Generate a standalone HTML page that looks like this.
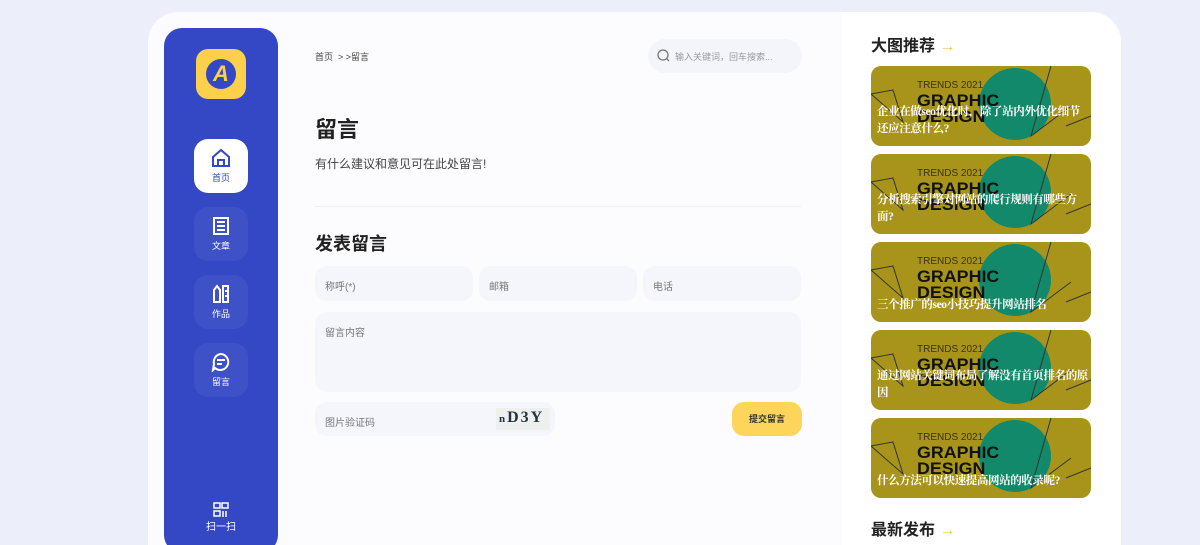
<!DOCTYPE html>
<html><head><meta charset="utf-8"><style>
*{margin:0;padding:0;box-sizing:border-box}
html,body{width:1200px;height:545px;overflow:hidden}
body{background:#eceef9;font-family:"Liberation Sans","Noto Sans CJK SC",sans-serif;position:relative}
.card{position:absolute;left:148px;top:12px;width:973px;height:545px;background:#fcfcfe;border-radius:30px 30px 0 0;overflow:hidden}
.right{position:absolute;left:694px;top:0;width:279px;height:545px;background:#fff}
.side{position:absolute;left:16px;top:16px;width:114px;height:525px;background:#3447c4;border-radius:18px}
.logo{position:absolute;left:32px;top:21px;width:50px;height:50px;background:#fcd04a;border-radius:12px}
.logo .c{position:absolute;left:10px;top:10px;width:30px;height:30px;border-radius:50%;background:#3447c4}
.logo .c span{position:absolute;left:0;top:2px;width:30px;text-align:center;color:#fcd04a;font-weight:bold;font-style:italic;font-size:22px}
.nav{position:absolute;left:30px;width:54px;height:54px;border-radius:14px;background:rgba(255,255,255,.06);color:#fff;font-size:9px;text-align:center}
.nav.on{background:#fff;color:#3447c4}
.nav svg{display:block;margin:9px auto 3px}
.abs{position:absolute}
.inp{position:absolute;background:#f5f6fb;border-radius:12px;font-size:10px;color:#777;padding:12px 10px}
.pic{position:absolute;left:29px;width:220px;height:80px;border-radius:10px;background:#a8941a;overflow:hidden}
.pic .ci{position:absolute;left:108px;top:2px;width:72px;height:72px;border-radius:50%;background:#12896a}
.pic .tr{position:absolute;left:46px;top:14px;font-size:10px;color:#3a3410}
.pic .g{position:absolute;left:46px;top:27px;font-size:17px;font-weight:900;color:#111;line-height:16px;transform:scaleX(1.05);transform-origin:left}
.pic .t{position:absolute;left:6px;right:2px;bottom:8px;color:#fff;font-size:11.5px;letter-spacing:-0.4px;font-weight:bold;line-height:17px;font-family:"Liberation Serif","Noto Serif CJK SC",serif}
.h{font-size:16px;font-weight:bold;color:#222}
.h i{color:#f6c34b;font-style:normal;font-weight:normal}
</style></head><body>
<div class="card">
 <div class="right">
  <div class="abs h" style="left:29px;top:20px">大图推荐 <i>→</i></div>
  <div class="pic" style="top:54px"><div class="ci"></div><svg class="abs" style="left:0;top:0" width="220" height="80"><path d="M0 28L22 24 32 56Z M180 0L160 70 200 40 M195 60L220 50" stroke="#333" fill="none" stroke-width="1"/></svg><div class="tr">TRENDS 2021</div><div class="g">GRAPHIC<br>DESIGN</div><div class="t">企业在做seo优化时，除了站内外优化细节还应注意什么?</div></div>
  <div class="pic" style="top:142px"><div class="ci"></div><svg class="abs" style="left:0;top:0" width="220" height="80"><path d="M0 28L22 24 32 56Z M180 0L160 70 200 40 M195 60L220 50" stroke="#333" fill="none" stroke-width="1"/></svg><div class="tr">TRENDS 2021</div><div class="g">GRAPHIC<br>DESIGN</div><div class="t">分析搜索引擎对网站的爬行规则有哪些方面?</div></div>
  <div class="pic" style="top:230px"><div class="ci"></div><svg class="abs" style="left:0;top:0" width="220" height="80"><path d="M0 28L22 24 32 56Z M180 0L160 70 200 40 M195 60L220 50" stroke="#333" fill="none" stroke-width="1"/></svg><div class="tr">TRENDS 2021</div><div class="g">GRAPHIC<br>DESIGN</div><div class="t">三个推广的seo小技巧提升网站排名</div></div>
  <div class="pic" style="top:318px"><div class="ci"></div><svg class="abs" style="left:0;top:0" width="220" height="80"><path d="M0 28L22 24 32 56Z M180 0L160 70 200 40 M195 60L220 50" stroke="#333" fill="none" stroke-width="1"/></svg><div class="tr">TRENDS 2021</div><div class="g">GRAPHIC<br>DESIGN</div><div class="t">通过网站关键词布局了解没有首页排名的原因</div></div>
  <div class="pic" style="top:406px"><div class="ci"></div><svg class="abs" style="left:0;top:0" width="220" height="80"><path d="M0 28L22 24 32 56Z M180 0L160 70 200 40 M195 60L220 50" stroke="#333" fill="none" stroke-width="1"/></svg><div class="tr">TRENDS 2021</div><div class="g">GRAPHIC<br>DESIGN</div><div class="t">什么方法可以快速提高网站的收录呢?</div></div>
  <div class="abs h" style="left:29px;top:504px">最新发布 <i>→</i></div>
 </div>
 <div class="side">
  <div class="logo"><div class="c"><span>A</span></div></div>
  <div class="nav on" style="top:111px"><svg width="20" height="20" viewBox="0 0 20 20" fill="none" stroke="#3447c4" stroke-width="2"><path d="M2 9L10 2 18 9V18H2Z M7 18V12H13V18"/></svg>首页</div>
  <div class="nav" style="top:179px"><svg width="20" height="20" viewBox="0 0 20 20" fill="none" stroke="#fff" stroke-width="2"><rect x="3" y="2" width="14" height="16"/><path d="M6 6H14M6 10H14M6 14H14"/></svg>文章</div>
  <div class="nav" style="top:247px"><svg width="20" height="20" viewBox="0 0 20 20" fill="none" stroke="#fff" stroke-width="2"><path d="M3 18V6L6 2 9 6V18Z M12 2H17V18H12Z M14 7H17M14 12H17"/></svg>作品</div>
  <div class="nav" style="top:315px"><svg width="20" height="20" viewBox="0 0 20 20" fill="none" stroke="#fff" stroke-width="2"><path d="M10 2A8 8 0 1 1 4 16L2 18 3 12A8 8 0 0 1 10 2Z M6 8H14M6 12H11"/></svg>留言</div>
  <div class="abs" style="left:0;top:474px;width:114px;text-align:center;color:#fff;font-size:10px"><svg width="16" height="16" viewBox="0 0 16 16" fill="none" stroke="#fff" stroke-width="1.5" style="display:block;margin:0 auto"><rect x="1" y="1" width="6" height="5"/><rect x="9" y="1" width="6" height="5"/><rect x="1" y="9" width="6" height="5"/><path d="M10 9V15M13 9V15"/></svg>扫一扫</div>
 </div>
 <div class="abs" style="left:167px;top:38px;font-size:9px;color:#444">首页 &nbsp;&gt; &gt;留言</div>
 <div class="abs" style="left:500px;top:27px;width:154px;height:34px;border-radius:17px;background:#f4f5fa;font-size:9px;color:#999;padding:11px 0 0 27px;white-space:nowrap"><svg class="abs" style="left:9px;top:10px" width="13" height="13" viewBox="0 0 13 13" fill="none" stroke="#777" stroke-width="1.3"><circle cx="6" cy="6" r="5"/><path d="M10 10L12 12"/></svg>输入关键词，回车搜索...</div>
 <div class="abs" style="left:167px;top:100px;font-size:22px;font-weight:bold;color:#222">留言</div>
 <div class="abs" style="left:167px;top:143px;font-size:12px;color:#444">有什么建议和意见可在此处留言!</div>
 <div class="abs" style="left:167px;top:194px;width:486px;height:1px;background:#eef0f4"></div>
 <div class="abs" style="left:167px;top:218px;font-size:18px;font-weight:bold;color:#222">发表留言</div>
 <div class="inp" style="left:167px;top:254px;width:158px;height:35px">称呼(*)</div>
 <div class="inp" style="left:331px;top:254px;width:158px;height:35px">邮箱</div>
 <div class="inp" style="left:495px;top:254px;width:158px;height:35px">电话</div>
 <div class="inp" style="left:167px;top:300px;width:486px;height:80px">留言内容</div>
 <div class="inp" style="left:167px;top:390px;width:240px;height:34px">图片验证码</div>
 <div class="abs" style="left:348px;top:396px;width:54px;height:22px;background:#eef0ee;font-family:'Liberation Serif',serif;font-weight:bold;font-size:16px;color:#234;letter-spacing:2px;padding:1px 0 0 3px;white-space:nowrap;overflow:hidden"><span style="font-size:11px">n</span>D3Y</div>
 <div class="abs" style="left:584px;top:390px;width:70px;height:34px;border-radius:12px;background:#fcd55a;font-size:9px;color:#333;text-align:center;line-height:34px;font-weight:bold">提交留言</div>
</div>
</body></html>
